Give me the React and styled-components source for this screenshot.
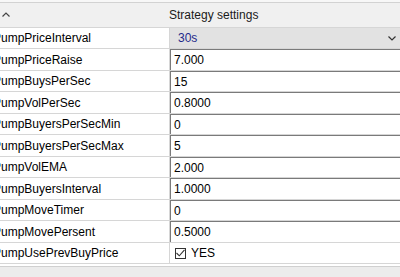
import styled, { createGlobalStyle } from "styled-components"

const rows = [
  { name: "PumpPriceInterval", value: "30s", kind: "select" },
  { name: "PumpPriceRaise", value: "7.000" },
  { name: "PumpBuysPerSec", value: "15" },
  { name: "PumpVolPerSec", value: "0.8000" },
  { name: "PumpBuyersPerSecMin", value: "0" },
  { name: "PumpBuyersPerSecMax", value: "5" },
  { name: "PumpVolEMA", value: "2.000" },
  { name: "PumpBuyersInterval", value: "1.0000" },
  { name: "PumpMoveTimer", value: "0" },
  { name: "PumpMovePersent", value: "0.5000" },
  { name: "PumpUsePrevBuyPrice", value: "YES", kind: "check" },
]

const App = () => {
  return (
    <>
      <GlobalStyle />
      <Grid>
        <TopStrip />
        <Header>
          <Collapse>
            <svg width="8" height="5" viewBox="0 0 8 5">
              <path d="M0.5 4.5 L4 1 L7.5 4.5" fill="none" stroke="#444" strokeWidth="1.2" />
            </svg>
          </Collapse>
          <Title>Strategy settings</Title>
        </Header>
        {rows.map((row) => (
          <Row key={row.name}>
            <NameCell>
              <Name>{row.name}</Name>
            </NameCell>
            <ValueCell $kind={row.kind}>
              {row.kind === "check" ? (
                <>
                  <CheckBox>
                    <svg width="9" height="8" viewBox="0 0 9 8">
                      <path d="M0.5 4 L3.3 6.8 L8.5 0.8" fill="none" stroke="#333" strokeWidth="1.1" />
                    </svg>
                  </CheckBox>
                  <CheckText>{row.value}</CheckText>
                </>
              ) : (
                <ValueText $kind={row.kind}>{row.value}</ValueText>
              )}
              {row.kind === "select" && (
                <Chevron>
                  <svg width="8" height="5" viewBox="0 0 8 5">
                    <path d="M0.5 0.5 L4 4 L7.5 0.5" fill="none" stroke="#333" strokeWidth="1.2" />
                  </svg>
                </Chevron>
              )}
            </ValueCell>
          </Row>
        ))}
        <Footer />
      </Grid>
    </>
  )
}

const GlobalStyle = createGlobalStyle`
  html, body {
    margin: 0;
    padding: 0;
    background: #ffffff;
    overflow: hidden;
  }
  body {
    font-family: "Liberation Sans", Arial, sans-serif;
    font-size: 12px;
    color: #000;
  }
`

const Grid = styled.div`
  display: flex;
  flex-direction: column;
  width: 400px;
  height: 277px;
  overflow: hidden;
`

const TopStrip = styled.div`
  height: 2px;
  background: #f7f7f7;
  border-bottom: 1px solid #d2d2d2;
`

const Header = styled.div`
  height: 24px;
  display: flex;
  align-items: center;
  background: #f0f0f0;
`

const Collapse = styled.span`
  display: flex;
  width: 10px;
  padding-left: 2px;
  margin-top: -2px;
`

const Title = styled.span`
  margin-left: 157px;
  color: #1a1a1a;
`

const Row = styled.div`
  display: grid;
  grid-template-columns: 170px 1fr;
  height: 22px;
  box-sizing: border-box;
  border-top: 1px solid #d6d6d6;

  &:nth-of-type(odd) {
    height: 21px;
  }
`

const NameCell = styled.div`
  display: flex;
  align-items: center;
  overflow: hidden;
  white-space: nowrap;
  border-right: 1px solid #d6d6d6;
`

const Name = styled.span`
  margin-left: -7px;
`

const ValueCell = styled.div`
  display: flex;
  align-items: center;
  box-sizing: border-box;
  padding-left: ${(p) => (p.$kind === "check" ? "4px" : "3px")};
  background: ${(p) => (p.$kind === "select" ? "#e2e2e2" : "#ffffff")};
  border-top: ${(p) => (p.$kind ? "none" : "1px solid #7a7a7a")};
  border-left: ${(p) => (p.$kind ? "none" : "1px solid #7a7a7a")};
`

const ValueText = styled.span`
  flex: 1;
  padding-left: ${(p) => (p.$kind === "select" ? "5px" : "0")};
  color: ${(p) => (p.$kind === "select" ? "#1f2a8a" : "#000")};
`

const Chevron = styled.span`
  display: flex;
  padding-right: 4px;
`

const CheckBox = styled.span`
  display: flex;
  align-items: center;
  justify-content: center;
  width: 9px;
  height: 9px;
  border: 1px solid #333;
  margin-left: 1px;
`

const CheckText = styled.span`
  margin-left: 5px;
`

const Footer = styled.div`
  flex: 1;
  border-top: 1px solid #d6d6d6;
  background: linear-gradient(#ffffff 0 2px, #d0d0d0 2px 3px, #ececec 3px);
`

export default App
